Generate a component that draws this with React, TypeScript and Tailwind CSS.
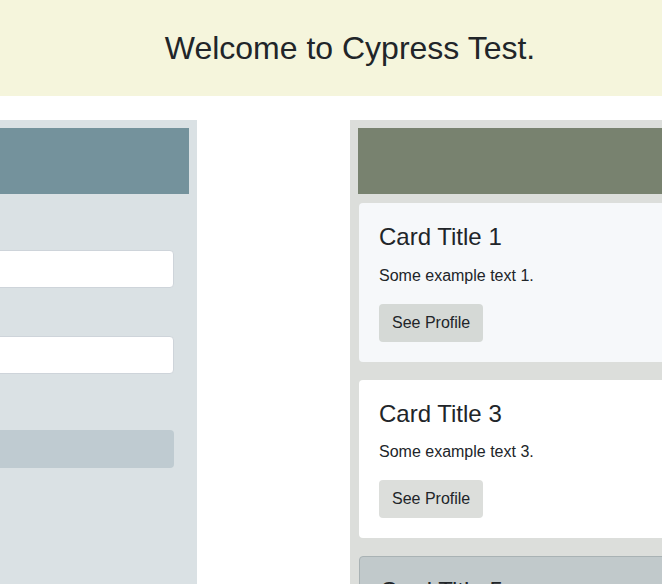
const font = { fontFamily: '"Liberation Sans", Arial, sans-serif' };

type Card = { n: number; bg: string; btn: string };

const cards: Card[] = [
  { n: 1, bg: 'bg-[#f6f8fa]', btn: 'bg-[#d5d9d6]' },
  { n: 3, bg: 'bg-white', btn: 'bg-[#dcdedb]' },
  { n: 5, bg: 'bg-[#c1c9cb] border border-[#a9b2b4]', btn: 'bg-[#d5d9d6]' },
];

function ProfileCard({ card }: { card: Card }) {
  return (
    <div className={`ml-px rounded p-5 ${card.bg}`}>
      <h4 className="text-2xl leading-[1.2] mb-3">Card Title {card.n}</h4>
      <p className="text-base leading-6 mb-4">Some example text {card.n}.</p>
      <button
        className={`h-[38px] px-3 border border-transparent rounded text-base leading-6 text-[#212529] ${card.btn}`}
      >
        See Profile
      </button>
    </div>
  );
}

export default function App() {
  return (
    <div className="w-[662px] h-[584px] overflow-hidden bg-white text-[#212529]" style={font}>
      <div className="-ml-[160px] w-[1020px]">
        {/* Top banner */}
        <header className="h-24 bg-[#f5f5dc] flex items-center justify-center">
          <h2 className="text-[32px] leading-[1.2]">Welcome to Cypress Test.</h2>
        </header>

        <div className="flex gap-[153px] mt-6">
          {/* Form panel */}
          <section className="w-[357px] h-[500px] bg-[#dae1e4] p-2">
            <div className="h-[66px] bg-[#74929c]" />
            <form className="pl-4 pr-[15px] pt-14">
              <div className="h-[38px] bg-white border border-[#ced4da] rounded mb-12" />
              <div className="h-[38px] bg-white border border-[#ced4da] rounded" />
              <div className="h-[38px] bg-[#bfcbd1] rounded mt-14" />
            </form>
          </section>

          {/* Cards panel */}
          <section className="w-[400px] h-[500px] bg-[#dcdedb] p-2">
            <div className="h-[66px] bg-[#78826f]" />
            <div className="flex flex-col gap-[17.8px] mt-[9px]">
              {cards.map((c) => (
                <ProfileCard key={c.n} card={c} />
              ))}
            </div>
          </section>
        </div>
      </div>
    </div>
  );
}
